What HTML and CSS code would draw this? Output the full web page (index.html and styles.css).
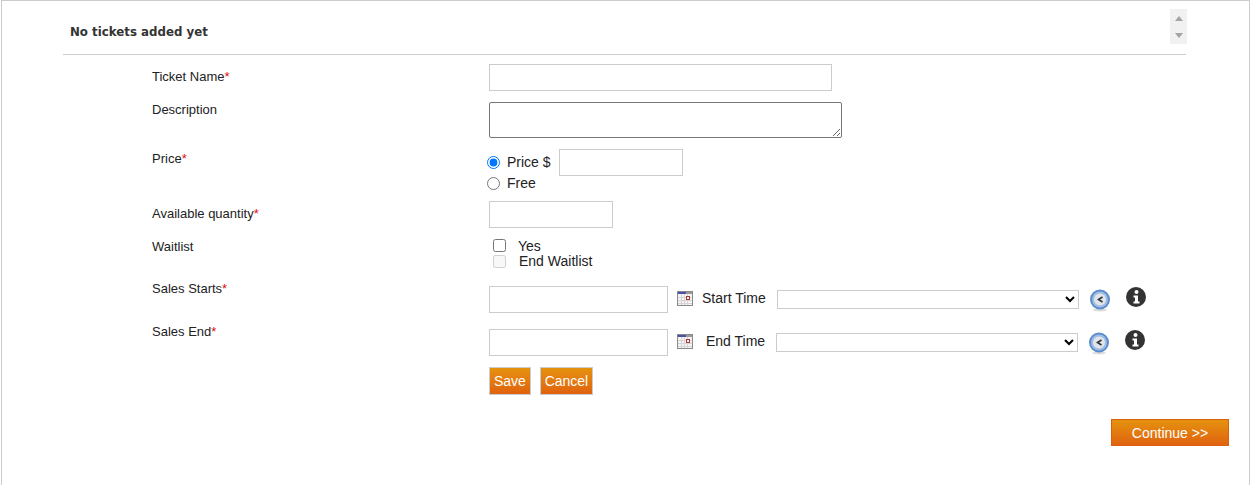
FILE: index.html
```html
<!DOCTYPE html>
<html lang="en">
<head>
  <meta charset="UTF-8" />
  <title>Add Tickets</title>
  <link rel="stylesheet" href="styles.css">
</head>
<body>
  <div class="panel">
    <div class="ticket-list">
      <h2>No tickets added yet</h2>
      <div class="scroller">
        <span class="arrow-up"></span>
        <span class="arrow-down"></span>
      </div>
    </div>

    <form class="ticket-form">
      <div class="row row-name">
        <label>Ticket Name<span class="req">*</span></label>
        <div class="field"><input type="text" class="input-name"></div>
      </div>
      <div class="row row-desc">
        <label>Description</label>
        <div class="field"><textarea class="input-desc"></textarea></div>
      </div>
      <div class="row row-price">
        <label>Price<span class="req">*</span></label>
        <div class="field">
          <div class="price-line">
            <input type="radio" name="price" checked>
            <span class="price-text">Price $</span>
            <input type="text" class="input-small">
          </div>
          <div class="free-line">
            <input type="radio" name="price">
            <span class="price-text">Free</span>
          </div>
        </div>
      </div>
      <div class="row row-qty">
        <label>Available quantity<span class="req">*</span></label>
        <div class="field"><input type="text" class="input-small"></div>
      </div>
      <div class="row row-wait">
        <label>Waitlist</label>
        <div class="field wait-field">
          <div class="check-line">
            <input type="checkbox">
            <span class="check-yes">Yes</span>
          </div>
          <div class="check-line">
            <input type="checkbox" disabled class="check-end">
            <span>End Waitlist</span>
          </div>
        </div>
      </div>
      <div class="row row-date">
        <label>Sales Starts<span class="req">*</span></label>
        <div class="field date-field">
          <input type="text" class="input-date">
          <svg class="cal" width="16" height="15" viewBox="0 0 16 15">
            <rect x="0.5" y="0.5" width="15" height="14" fill="#f4f2f2" stroke="#8a8a8a"/>
            <rect x="1" y="1" width="8" height="2" fill="#4a4fa8"/>
            <rect x="9" y="1" width="6" height="2" fill="#9a9a9a"/>
            <path d="M1 6.5h14M1 9.5h14M1 12.5h14M4.5 3v11M7.5 3v11M10.5 3v11" stroke="#d8d4d4" fill="none"/>
            <rect x="9.5" y="5.5" width="3" height="3" fill="#f4f2f2" stroke="#a83a3a"/>
          </svg>
          <span class="time-label">Start Time</span>
          <select class="input-time"><option></option></select>
          <svg class="clock" width="20" height="23" viewBox="0 0 20 23">
            <ellipse cx="10" cy="21" rx="7" ry="1.5" fill="#dcdcdc"/>
            <circle cx="10" cy="10.5" r="10" fill="#5c8ccc"/>
            <circle cx="10" cy="10.5" r="8" fill="#9fbde2"/>
            <circle cx="10" cy="10.5" r="6" fill="#dfe5ea"/>
            <path d="M12.5 8l-4 2.5 4 2.5" fill="none" stroke="#333" stroke-width="1.6"/>
          </svg>
          <svg class="info" width="20" height="20" viewBox="0 0 20 20">
            <circle cx="10" cy="10" r="10" fill="#333"/>
            <circle cx="10.5" cy="5" r="2" fill="#fff"/>
            <path d="M7.5 8.5h4.5v6h1.5v2h-6v-2h1.5v-4h-1.5z" fill="#fff"/>
          </svg>
        </div>
      </div>
      <div class="row row-date row-end">
        <label>Sales End<span class="req">*</span></label>
        <div class="field date-field">
          <input type="text" class="input-date">
          <svg class="cal" width="16" height="15" viewBox="0 0 16 15">
            <rect x="0.5" y="0.5" width="15" height="14" fill="#f4f2f2" stroke="#8a8a8a"/>
            <rect x="1" y="1" width="8" height="2" fill="#4a4fa8"/>
            <rect x="9" y="1" width="6" height="2" fill="#9a9a9a"/>
            <path d="M1 6.5h14M1 9.5h14M1 12.5h14M4.5 3v11M7.5 3v11M10.5 3v11" stroke="#d8d4d4" fill="none"/>
            <rect x="9.5" y="5.5" width="3" height="3" fill="#f4f2f2" stroke="#a83a3a"/>
          </svg>
          <span class="time-label end-label">End Time</span>
          <select class="input-time"><option></option></select>
          <svg class="clock" width="20" height="23" viewBox="0 0 20 23">
            <ellipse cx="10" cy="21" rx="7" ry="1.5" fill="#dcdcdc"/>
            <circle cx="10" cy="10.5" r="10" fill="#5c8ccc"/>
            <circle cx="10" cy="10.5" r="8" fill="#9fbde2"/>
            <circle cx="10" cy="10.5" r="6" fill="#dfe5ea"/>
            <path d="M12.5 8l-4 2.5 4 2.5" fill="none" stroke="#333" stroke-width="1.6"/>
          </svg>
          <svg class="info" width="20" height="20" viewBox="0 0 20 20">
            <circle cx="10" cy="10" r="10" fill="#333"/>
            <circle cx="10.5" cy="5" r="2" fill="#fff"/>
            <path d="M7.5 8.5h4.5v6h1.5v2h-6v-2h1.5v-4h-1.5z" fill="#fff"/>
          </svg>
        </div>
      </div>
      <div class="row row-actions">
        <div class="field actions">
          <button type="button" class="btn">Save</button>
          <button type="button" class="btn btn-cancel">Cancel</button>
        </div>
      </div>
    </form>

    <div class="continue-bar">
      <button type="button" class="btn-continue">Continue &gt;&gt;</button>
    </div>
  </div>
</body>
</html>
```

FILE: styles.css
```css
* { box-sizing: border-box; }
html, body { margin: 0; padding: 0; background: #fff; overflow: hidden; }
body { font-family: "Liberation Sans", Arial, sans-serif; font-size: 13px; color: #222; }

.panel { height: 485px; border: 1px solid #ccc; border-bottom: none; margin-left: 1px; }

.ticket-list { display: flex; justify-content: space-between; align-items: flex-start; width: 1123px; height: 54px; margin-left: 61px; padding: 8px 0 0 7px; border-bottom: 1px solid #ccc; }
.ticket-list h2 { margin: 15px 0 0; font-family: "DejaVu Sans", Verdana, sans-serif; font-size: 11.8px; font-weight: bold; color: #333; line-height: 16px; }
.scroller { width: 17px; height: 35px; margin-right: -1px; background: #f1f1f1; display: flex; flex-direction: column; align-items: center; justify-content: space-between; padding: 7px 0 6px; }
.arrow-up { border: 4px solid transparent; border-top: none; border-bottom: 5px solid #a3a3a3; }
.arrow-down { border: 4px solid transparent; border-bottom: none; border-top: 5px solid #a3a3a3; }

.ticket-form { margin-left: 150px; }
.row { display: flex; }
.row label { width: 337px; flex: none; font-size: 13px; line-height: 14px; color: #222; }
.req { color: #e01010; }

input[type=text], textarea, select { border: 1px solid #ccc; background: #fff; margin: 0; padding: 0 2px; display: block; border-radius: 0; }

.row-name { margin-top: 9px; }
.row-name label { padding-top: 6px; }
.input-name { width: 343px; height: 27px; }

.row-desc { margin-top: 11px; }
.row-desc label { padding-top: 1px; }
.input-desc { width: 353px; height: 36px; border-color: #767676; border-radius: 2px; resize: both; }

.row-price { margin-top: 11px; }
.row-price label { padding-top: 3px; }
.row-price .field { margin-left: -2px; font-size: 14px; }
.price-line { display: flex; align-items: center; height: 27px; }
.free-line { display: flex; align-items: center; height: 15px; }
.row-price input[type=radio] { margin: 0 7px 0 0; width: 13px; height: 13px; }
.price-text { line-height: 15px; }
.price-line .price-text { width: 52px; }
.input-small { width: 124px; height: 27px; }

.row-qty { margin-top: 10px; }
.row-qty label { padding-top: 6px; }

.row-wait { margin-top: 11px; }
.row-wait label { padding-top: 1px; }
.wait-field { font-size: 14px; margin-top: -2px; }
.check-line { display: flex; align-items: center; height: 16px; padding-left: 4px; }
.check-line input { margin: 0 12px 0 0; width: 13px; height: 13px; }
.check-line input.check-end { margin-right: 13px; }
.check-yes { padding-top: 2px; }

.row-date { margin-top: 17px; }
.row-date label { margin-top: -4px; }
.row-end { margin-top: 16px; }
.date-field { display: flex; align-items: flex-start; font-size: 14px; }
.input-date { width: 179px; height: 27px; }
.cal { margin: 5px 9px 0 9px; flex: none; }
.time-label { width: 75px; line-height: 16px; margin-top: 4px; }
.end-label { width: 70px; margin-left: 4px; }
.input-time { width: 302px; height: 19px; margin-top: 4px; }
.clock { margin: 3px 0 0 11px; flex: none; }
.info { margin: 1px 0 0 16px; flex: none; }

.row-actions { margin-top: 11px; padding-left: 337px; }
.actions { display: flex; gap: 9px; }
.btn { height: 28px; padding: 0 4px; border: 1px solid #ccc; background: linear-gradient(#e5920f, #e0620f); color: #fff; font-family: "Liberation Sans", Arial, sans-serif; font-size: 14px; }
.btn-cancel { width: 53px; padding: 0; }

.continue-bar { display: flex; justify-content: flex-end; margin-top: 24px; padding-right: 20px; }
.btn-continue { width: 118px; height: 27px; border: 1px solid #d9600f; background: linear-gradient(#e5920f, #e0620f); color: #fff; font-family: "Liberation Sans", Arial, sans-serif; font-size: 14px; padding: 0; }
```
